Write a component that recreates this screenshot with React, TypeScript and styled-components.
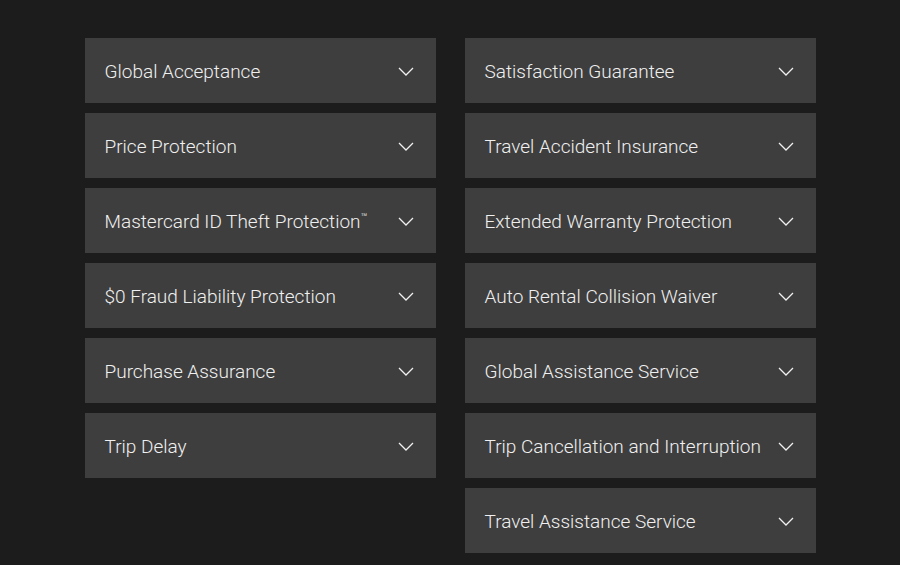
import styled, { createGlobalStyle } from "styled-components";

const GlobalStyle = createGlobalStyle`
  * {
    box-sizing: border-box;
    margin: 0;
    padding: 0;
  }

  body {
    background: #1c1c1c;
    font-family: Roboto, "Liberation Sans", sans-serif;
  }
`;

const Page = styled.main`
  width: 900px;
  min-height: 565px;
  padding-top: 38px;
  display: flex;
  justify-content: center;
  gap: 29px;
`;

const Column = styled.div`
  width: 351px;
  display: flex;
  flex-direction: column;
  gap: 10px;
`;

const Item = styled.button`
  height: 65px;
  width: 100%;
  display: flex;
  align-items: center;
  justify-content: space-between;
  padding: 2px 22px 0 20px;
  background: #3e3e3e;
  border: none;
  color: #f0f0f0;
  font-family: Roboto, "Liberation Sans", sans-serif;
  font-weight: 300;
  font-size: 19px;
  text-align: left;
  cursor: pointer;
`;

const Tm = styled.sup`
  font-size: 11px;
  vertical-align: 7px;
`;

const Chevron = () => (
  <svg width="16" height="9" viewBox="0 0 16 9" fill="none">
    <path d="M1 1l7 7 7-7" stroke="#f0f0f0" strokeWidth="1.3" />
  </svg>
);

const left: React.ReactNode[] = [
  "Global Acceptance",
  "Price Protection",
  <>
    Mastercard ID Theft Protection<Tm>™</Tm>
  </>,
  "$0 Fraud Liability Protection",
  "Purchase Assurance",
  "Trip Delay",
];

const right: React.ReactNode[] = [
  "Satisfaction Guarantee",
  "Travel Accident Insurance",
  "Extended Warranty Protection",
  "Auto Rental Collision Waiver",
  "Global Assistance Service",
  "Trip Cancellation and Interruption",
  "Travel Assistance Service",
];

export default function App() {
  return (
    <>
      <GlobalStyle />
      <Page>
        {[left, right].map((col, i) => (
          <Column key={i}>
            {col.map((label, j) => (
              <Item key={j}>
                <span>{label}</span>
                <Chevron />
              </Item>
            ))}
          </Column>
        ))}
      </Page>
    </>
  );
}
